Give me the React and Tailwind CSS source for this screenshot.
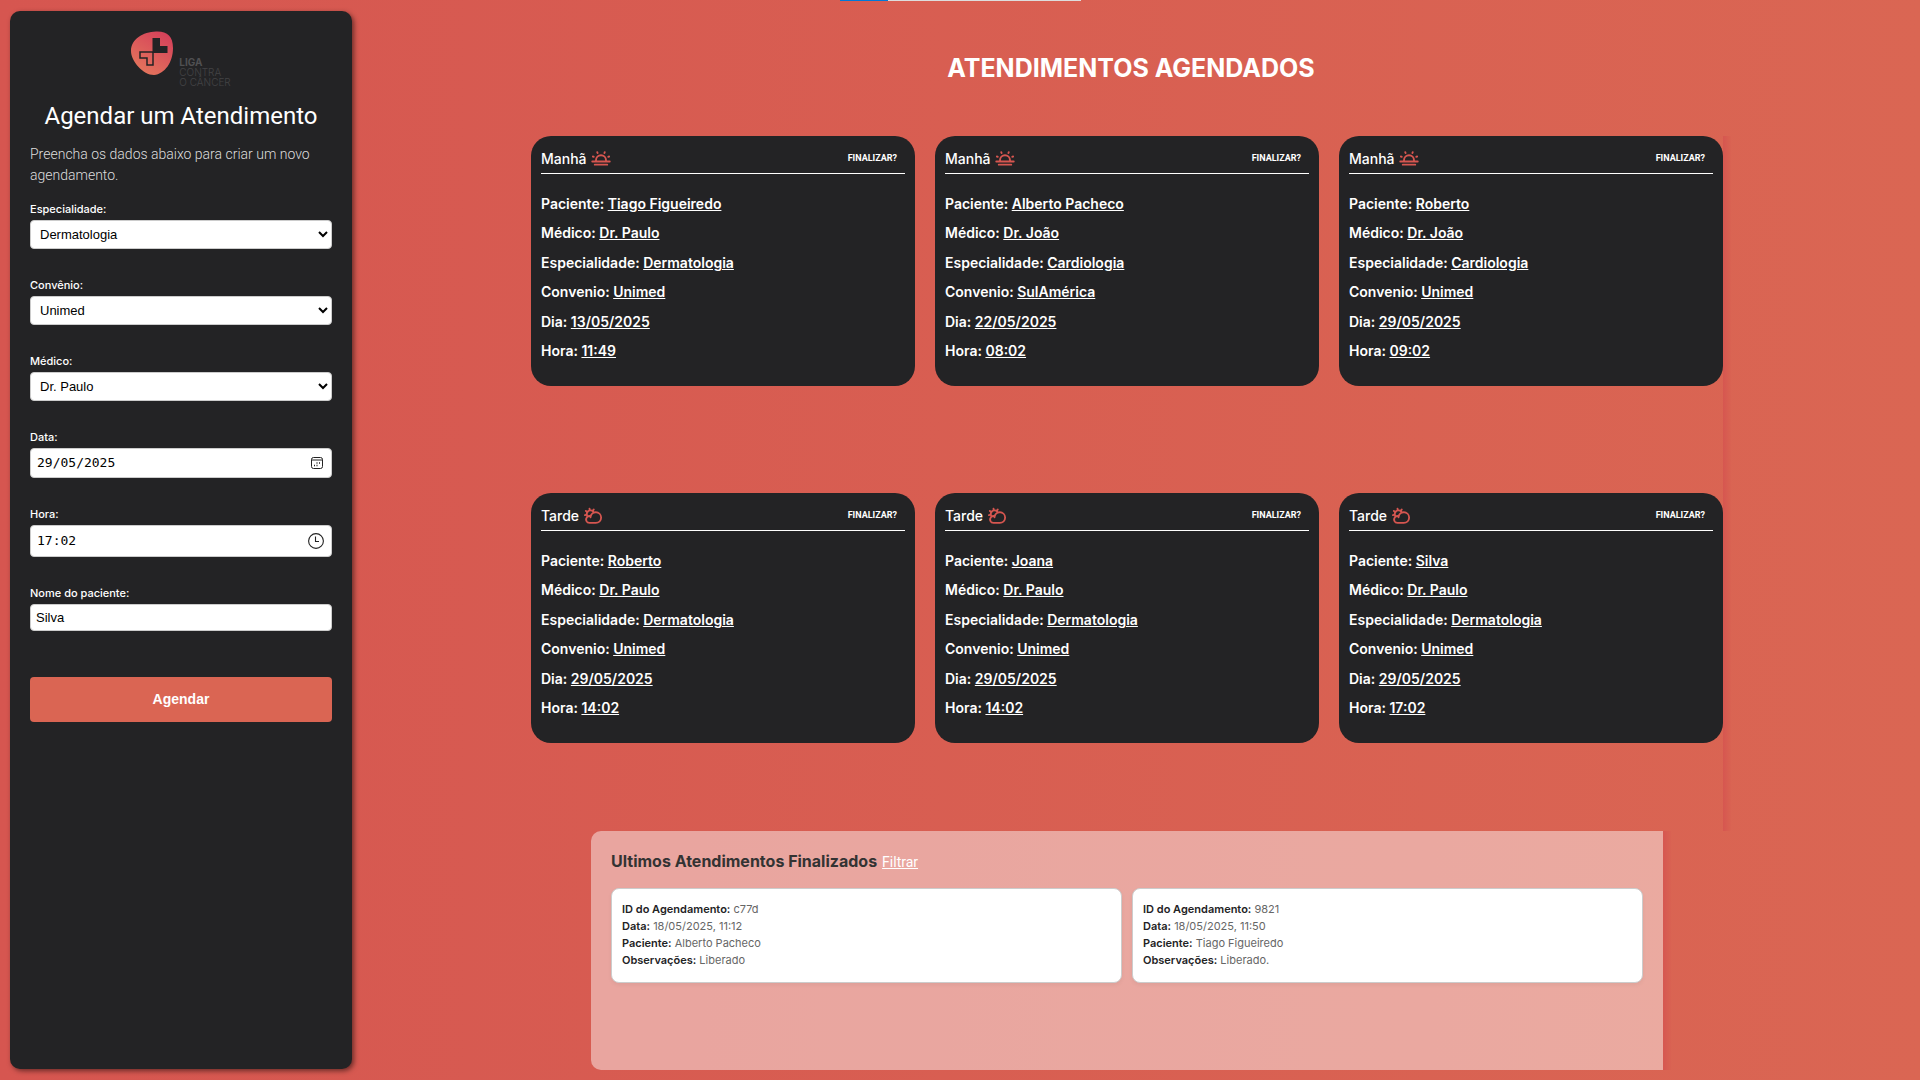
import React from "react";
import { PiCloudSunBold, PiSunHorizonBold } from "react-icons/pi";

const DISPLAY = "font-['Inter','Liberation_Sans',sans-serif]";

const appointments = [
  { turno: "Manhã", paciente: "Tiago Figueiredo", medico: "Dr. Paulo", esp: "Dermatologia", conv: "Unimed", dia: "13/05/2025", hora: "11:49" },
  { turno: "Manhã", paciente: "Alberto Pacheco", medico: "Dr. João", esp: "Cardiologia", conv: "SulAmérica", dia: "22/05/2025", hora: "08:02" },
  { turno: "Manhã", paciente: "Roberto", medico: "Dr. João", esp: "Cardiologia", conv: "Unimed", dia: "29/05/2025", hora: "09:02" },
  { turno: "Tarde", paciente: "Roberto", medico: "Dr. Paulo", esp: "Dermatologia", conv: "Unimed", dia: "29/05/2025", hora: "14:02" },
  { turno: "Tarde", paciente: "Joana", medico: "Dr. Paulo", esp: "Dermatologia", conv: "Unimed", dia: "29/05/2025", hora: "14:02" },
  { turno: "Tarde", paciente: "Silva", medico: "Dr. Paulo", esp: "Dermatologia", conv: "Unimed", dia: "29/05/2025", hora: "17:02" },
];

const finished = [
  { id: "c77d", data: "18/05/2025, 11:12", paciente: "Alberto Pacheco", obs: "Liberado" },
  { id: "9821", data: "18/05/2025, 11:50", paciente: "Tiago Figueiredo", obs: "Liberado." },
];

function Logo() {
  return (
    <div className="flex items-end gap-1.5" role="img" aria-label="Liga Contra o Câncer">
      <svg viewBox="0 0 42 44" className="mb-3 h-11 w-[42px]">
        <defs>
          <linearGradient id="logoFill" x1="0.2" y1="1" x2="0.8" y2="0">
            <stop offset="0" stopColor="#e4785c" />
            <stop offset="1" stopColor="#d5405a" />
          </linearGradient>
        </defs>
        <path d="M25 .5C36 0 42 5 42 17c0 14-8 26-19 27C12 44 0 30 0 20 0 8 12 1 25 .5Z" fill="url(#logoFill)" />
        <path d="M21.5 7H29v8h7.5v7h-15Z" fill="#232325" />
        <path d="M9 21h13v13h-6v-7H9Z" fill="none" stroke="#232325" strokeWidth="1.5" />
      </svg>
      <div className={`${DISPLAY} text-[10px] leading-[10px] font-light text-[#434345]`}>
        <div className="font-bold text-[#505052]">LIGA</div>
        <div>CONTRA</div>
        <div>O CÂNCER</div>
      </div>
    </div>
  );
}

function Label({ htmlFor, children }) {
  return (
    <label htmlFor={htmlFor} className={`${DISPLAY} block text-[11px] leading-3 font-medium text-white`}>
      {children}
    </label>
  );
}

function SelectField({ id, label, value }) {
  return (
    <div className="mb-[30px]">
      <Label htmlFor={id}>{label}</Label>
      <select id={id} defaultValue={value} className="mt-[5px] block h-[29px] w-full rounded border border-[#ccc] bg-white px-[5px] font-['Liberation_Sans',Arial,sans-serif] text-[13px] text-black">
        <option>{value}</option>
      </select>
    </div>
  );
}

function Row({ label, children }) {
  return (
    <p>
      {label}: <span className="underline">{children}</span>
    </p>
  );
}

function AppointmentCard({ item }) {
  const Icon = item.turno === "Manhã" ? PiSunHorizonBold : PiCloudSunBold;
  return (
    <article className={`${DISPLAY} rounded-[20px] bg-[#232325] px-2.5 pt-2.5 pb-5 text-white`}>
      <header className="flex h-[28px] items-center justify-between border-b border-white pr-2 pb-0.5">
        <h3 className="flex items-center gap-1 text-[14px] font-medium">
          {item.turno}
          <Icon className="size-5 text-[#d65650]" />
        </h3>
        <button type="button" className="font-['Roboto',sans-serif] text-[9px] font-bold">FINALIZAR?</button>
      </header>
      <div className="mt-[15px] grid h-[177px] grid-rows-6 items-center text-[14px] leading-5 font-semibold">
        <Row label="Paciente">{item.paciente}</Row>
        <Row label="Médico">{item.medico}</Row>
        <Row label="Especialidade">{item.esp}</Row>
        <Row label="Convenio">{item.conv}</Row>
        <Row label="Dia">{item.dia}</Row>
        <Row label="Hora">{item.hora}</Row>
      </div>
    </article>
  );
}

export default function App() {
  return (
    <div className="flex min-h-screen bg-linear-to-r from-[#d65650] to-[#da6653] font-['Roboto',sans-serif]">
      <aside className="my-[11px] ml-2.5 flex w-[342px] shrink-0 flex-col rounded-[10px] bg-[#232325] px-5 pt-5 shadow-[2px_2px_5px_rgba(0,0,0,0.5)]">
        <div className="flex h-[56px] justify-center"><Logo /></div>
        <h1 className="mt-[13px] text-center text-[24px] leading-8 text-white">Agendar um Atendimento</h1>
        <p className="mt-3 text-[14px] leading-[21px] font-light text-[#ddd]">Preencha os dados abaixo para criar um novo agendamento.</p>
        <form className="mt-[17px]" onSubmit={(e) => e.preventDefault()}>
          <SelectField id="esp" label="Especialidade:" value="Dermatologia" />
          <SelectField id="conv" label="Convênio:" value="Unimed" />
          <SelectField id="med" label="Médico:" value="Dr. Paulo" />
          <Label htmlFor="data">Data:</Label>
          <div className="mt-[5px] mb-[30px] flex h-[30px] items-center justify-between rounded border border-[#ccc] bg-white pr-[7px] pl-1.5">
            <input id="data" defaultValue="29/05/2025" className="min-w-0 flex-1 font-['DejaVu_Sans_Mono',monospace] text-[13px] text-black outline-none" />
            <svg viewBox="0 0 14 14" className="size-3.5" fill="none" stroke="#222" strokeWidth="1">
              <rect x="1.5" y="1.5" width="11" height="11" rx="2" />
              <path d="M1.5 4h11" />
              <path d="M6.5 7h1M9 7h1M4 9.5h1M6.5 9.5h1" strokeWidth="1.3" />
            </svg>
          </div>
          <Label htmlFor="hora">Hora:</Label>
          <div className="mt-[5px] mb-[30px] flex h-8 items-center justify-between rounded border border-[#ccc] bg-white pr-[7px] pl-1.5">
            <input id="hora" defaultValue="17:02" className="min-w-0 flex-1 font-['DejaVu_Sans_Mono',monospace] text-[13px] text-black outline-none" />
            <svg viewBox="0 0 16 16" className="size-4" fill="none" stroke="#222" strokeWidth="1.1">
              <circle cx="8" cy="8" r="7.4" />
              <path d="M7.5 3.5v5H11" />
            </svg>
          </div>
          <Label htmlFor="nome">Nome do paciente:</Label>
          <input id="nome" defaultValue="Silva" className="mt-[5px] block h-[27px] w-full rounded border border-[#ccc] bg-white px-[5px] font-['Liberation_Sans',Arial,sans-serif] text-[13px] text-black" />
          <button type="submit" className="mt-[46px] h-[45px] w-full rounded bg-[#da6553] font-['Liberation_Sans',Arial,sans-serif] text-[14px] font-bold text-white">Agendar</button>
        </form>
      </aside>

      <main className="-ml-2.5 flex min-w-0 flex-1 flex-col items-center pb-2.5">
        <progress value="20" max="100" aria-label="Carregando" className="-ml-[342px] block h-px w-[241px] appearance-none [&::-webkit-progress-bar]:bg-[#ddd] [&::-webkit-progress-value]:bg-[#0078d7]" />
        <h2 className={`${DISPLAY} mt-[51px] text-[25px] leading-8 font-bold text-white`}>ATENDIMENTOS AGENDADOS</h2>
        <section className="mt-[52px] flex w-full max-w-[1200px] flex-1">
          <div className="grid flex-1 grid-cols-3 content-start gap-x-5 gap-y-[107px]">
            {appointments.map((a, i) => <AppointmentCard key={i} item={a} />)}
          </div>
          <div className="w-2 bg-linear-to-r from-[#d65650] to-[#d96352]" />
        </section>
        <section className={`${DISPLAY} flex h-[239px] w-full max-w-[1080px]`}>
          <div className="min-w-0 flex-1 rounded-l-[10px] bg-white/45 px-5 pt-5">
            <div className="flex items-baseline gap-[5px]">
              <h2 className="text-[16px] leading-5 font-bold text-[#333]">Ultimos Atendimentos Finalizados</h2>
              <a href="#filtrar" className="font-['Roboto',sans-serif] text-[14px] text-white underline">Filtrar</a>
            </div>
            <div className="mt-[15px] grid grid-cols-2 gap-2.5">
              {finished.map((f) => (
                <article key={f.id} className="rounded-lg border border-[#ccc] bg-white px-2.5 pt-3 pb-[13px] text-[11px] leading-[17px] text-[#666] shadow-[0_2px_4px_rgba(0,0,0,0.05)]">
                  <p><strong className="font-semibold text-[#232325]">ID do Agendamento:</strong> {f.id}</p>
                  <p><strong className="font-semibold text-[#232325]">Data:</strong> {f.data}</p>
                  <p><strong className="font-semibold text-[#232325]">Paciente:</strong> {f.paciente}</p>
                  <p><strong className="font-semibold text-[#232325]">Observações:</strong> {f.obs}</p>
                </article>
              ))}
            </div>
          </div>
          <div className="w-2 bg-linear-to-r from-[#d65650] to-[#d96252]" />
        </section>
      </main>
    </div>
  );
}
